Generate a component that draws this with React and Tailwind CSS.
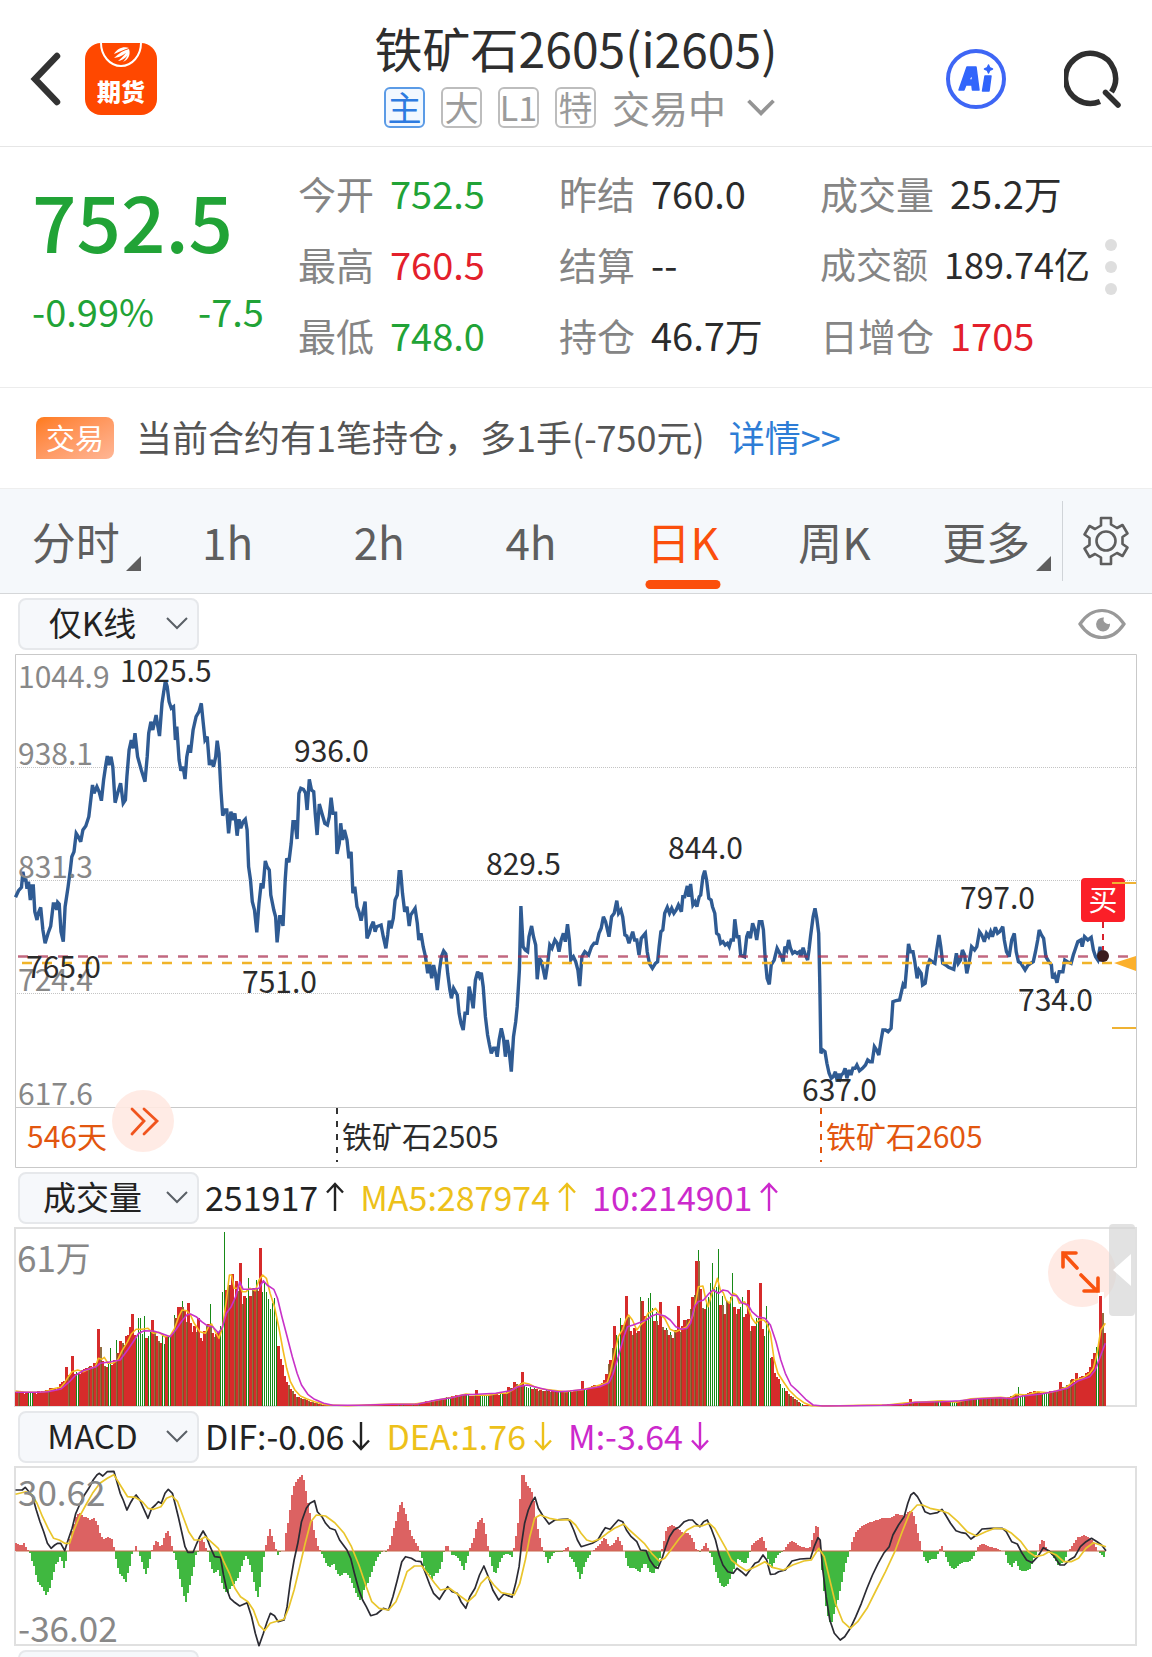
import React from "react";

/* ---------- chart data ---------- */

const parse = (text, originX, scaleX, originY) =>
  text
    .trim()
    .split(/\s+/)
    .map((pair) => {
      const [x, y] = pair.split(",").map(Number);
      return [originX + x / scaleX, originY + y / 3];
    });

const series = (early, late, originY) => {
  const b = parse(late, 570, 2.694, originY);
  const a = parse(early, 0, 2.703, originY).filter((p) => p[0] < b[0][0]);
  return [...a, ...b];
};

const toPath = (points) =>
  points.map(([x, y], i) => `${i ? "L" : "M"}${x.toFixed(1)} ${y.toFixed(1)}`).join("");

const valueAt = (points, x) => {
  for (let i = 1; i < points.length; i++) {
    if (points[i][0] >= x) {
      const [x0, y0] = points[i - 1];
      const [x1, y1] = points[i];
      return y0 + ((y1 - y0) * (x - x0)) / (x1 - x0 || 1);
    }
  }
  return points[points.length - 1][1];
};

const PRICE = series(
  `42,742 50,722 58,712 62,665 66,690 70,690 73,716 77,695 82,750 86,708 90,708 94,785 100,810 104,788 110,772 116,840 122,880 130,850 137,828 144,762 150,762 153,780 156,757 160,762 165,845 171,875 176,770 184,710 190,660 194,620 200,605 206,550 212,560 218,575 224,540 232,528 240,500 250,405 254,430 262,410 268,425 274,452 280,390 286,345 290,318 294,345 300,320 305,350 311,458 318,430 326,400 333,460 339,450 343,380 349,300 355,270 360,295 365,250 372,320 382,360 392,395 398,320 402,250 408,215 413,240 422,195 426,225 431,258 438,160 447,92 452,110 457,155 463,175 469,170 474,270 478,230 484,330 489,362 495,350 500,387 505,320 511,285 515,308 522,240 530,200 538,185 544,160 549,215 554,270 560,260 566,345 571,330 577,350 583,320 587,272 592,310 597,420 602,497 608,480 613,480 618,550 624,485 630,510 635,490 641,557 646,508 651,535 657,515 663,508 668,540 672,650 677,690 682,755 688,780 694,847 700,760 706,700 711,715 717,633 722,650 728,660 732,735 740,780 745,800 749,877 756,800 760,800 765,828 771,690 775,625 781,637 787,580 792,515 797,515 803,567 808,430 813,415 820,418 826,430 830,480 836,388 842,420 848,425 852,490 857,555 863,462 870,490 878,520 885,525 890,500 895,443 900,490 907,490 911,612 917,580 921,520 926,570 931,540 938,570 943,625 949,605 954,730 959,710 965,770 970,785 976,812 982,780 987,755 992,865 998,850 1003,830 1009,815 1014,845 1018,830 1030,825 1036,860 1043,895 1048,855 1052,812 1057,835 1063,805 1068,750 1074,735 1079,665 1083,665 1088,730 1094,785 1100,770 1106,828 1110,795 1122,775 1128,820 1132,870 1138,850 1144,890 1150,920 1156,970 1161,940 1167,985 1172,945 1177,970 1182,1020 1188,960 1193,920 1199,903 1205,912 1210,970 1216,1020 1220,1045 1226,1015 1236,1035 1241,1090 1246,1120 1252,1140 1257,1090 1263,1090 1268,1010 1274,1040 1279,1075 1285,990 1291,965 1296,980 1301,968 1306,1010 1312,1100 1318,1155 1323,1185 1328,1210 1334,1195 1340,1195 1344,1220 1349,1170 1355,1135 1361,1165 1366,1220 1371,1170 1377,1210 1382,1265 1388,1160 1394,1115 1398,1070 1404,960 1408,768 1414,890 1420,900 1426,905 1430,860 1437,828 1442,860 1448,885 1452,988 1458,925 1464,935 1474,988 1480,945 1486,885 1492,895 1500,870 1506,880 1511,905 1517,870 1523,850 1528,875 1534,823 1539,870 1543,930 1550,920 1556,935 1562,960`,
  `26,1008 32,920 40,905 50,915 58,890 65,880 72,880 78,850 84,835 90,800 96,815 105,860 112,800 119,790 126,752 131,790 137,780 142,800 148,855 153,858 159,880 164,862 169,845 174,870 180,870 186,915 192,865 203,850 208,905 214,940 222,955 230,940 236,935 240,890 245,845 250,840 255,790 262,772 268,790 274,775 280,790 286,780 292,765 300,785 304,740 309,740 316,708 320,740 325,702 331,765 337,755 342,770 348,740 352,735 358,680 363,662 368,690 374,745 380,750 384,770 390,790 395,850 401,855 406,880 412,875 418,885 424,880 429,890 434,870 440,870 444,808 450,860 455,860 460,915 470,920 476,860 481,845 486,865 492,820 498,840 503,870 510,815 517,815 521,840 526,925 531,985 537,1003 542,945 550,930 558,895 565,910 570,920 574,935 579,890 584,900 589,870 594,895 600,910 606,905 612,910 618,905 622,918 628,893 634,915 640,930 644,900 648,860 655,800 660,775 665,805 670,850 673,1000 676,1210 681,1200 687,1205 692,1240 698,1270 704,1285 709,1280 715,1265 720,1295 724,1270 725,1295 731,1275 736,1270 741,1255 746,1285 752,1260 757,1275 762,1255 768,1255 773,1245 780,1262 788,1255 796,1245 802,1230 808,1235 814,1235 820,1190 826,1200 832,1215 838,1170 843,1140 850,1140 857,1145 865,1135 870,1055 878,1052 888,1050 893,1025 897,1005 902,1015 907,950 912,882 917,905 924,905 929,935 935,985 940,960 946,970 950,1005 957,1000 963,950 969,930 976,935 983,940 988,900 994,855 999,890 1004,940 1012,945 1020,952 1034,958 1041,910 1046,940 1052,930 1057,900 1063,915 1069,970 1075,940 1082,890 1090,900 1096,890 1103,845 1109,855 1116,875 1122,850 1128,860 1133,845 1138,860 1146,832 1152,850 1158,845 1166,830 1170,870 1176,905 1183,920 1190,870 1197,850 1202,905 1208,935 1215,940 1226,960 1234,945 1248,935 1254,905 1260,870 1264,840 1270,855 1276,865 1282,920 1290,935 1297,945 1300,985 1306,975 1312,998 1318,965 1328,965 1333,930 1340,935 1350,940 1356,915 1362,895 1368,875 1376,870 1380,890 1386,860 1395,870 1404,862 1410,900 1416,920 1422,930 1428,890 1430,935`,
  650
);

const MA5 = series(
  `42,693 70,697 95,697 115,696 130,692 150,685 165,682 175,668 185,650 195,635 210,630 225,635 245,625 258,620 266,595 275,598 282,592 292,610 305,610 318,600 330,572 345,545 355,522 368,508 385,508 400,505 415,520 430,517 445,530 460,528 472,505 483,470 492,450 505,452 515,465 525,490 540,515 555,520 565,498 572,492 582,515 592,535 602,500 612,420 620,345 626,345 633,385 642,385 648,375 655,395 665,395 675,385 690,392 700,360 710,345 720,355 730,400 742,440 755,510 765,570 775,625 785,665 797,690 812,708 830,717 850,725 880,734 940,737 1000,734 1060,732 1120,732 1160,725 1200,716 1230,710 1260,702 1290,706 1320,706 1350,700 1370,700 1385,690 1400,678 1415,668 1430,672 1445,680 1460,686 1490,690 1530,695`,
  `0,693 30,690 60,682 80,675 100,668 108,640 118,590 130,530 142,508 150,480 158,465 168,480 180,510 190,495 200,485 210,460 220,455 230,445 240,460 255,475 270,508 285,515 300,508 315,500 330,470 338,430 346,380 358,378 366,420 372,440 382,400 390,380 397,355 405,390 413,398 420,420 430,430 440,400 448,405 456,430 470,425 480,445 490,475 500,490 510,480 522,480 530,490 540,520 550,600 560,640 575,665 590,690 610,712 630,728 650,737 700,738 780,736 860,734 900,729 930,727 960,725 1000,722 1040,727 1080,716 1120,714 1160,712 1185,715 1200,703 1230,705 1260,695 1290,698 1320,690 1340,680 1360,660 1380,655 1400,640 1410,625 1420,580 1430,510 1442,490`,
  1160
);

const MA10 = series(
  `42,697 100,697 130,695 165,687 185,668 205,645 225,632 260,620 270,610 300,605 325,600 345,570 360,545 375,520 390,512 415,513 435,520 460,530 475,510 490,485 505,465 515,462 530,470 545,485 560,497 575,500 590,518 600,505 612,460 625,440 637,410 648,365 657,388 680,388 700,385 712,362 722,375 740,388 750,415 762,470 775,525 790,590 803,640 815,675 832,703 850,718 875,730 900,736 970,736 1060,733 1130,732 1180,720 1220,713 1250,705 1290,703 1340,700 1380,692 1400,680 1425,675 1450,682 1480,690 1510,695`,
  `0,693 40,688 80,680 105,668 115,645 130,590 145,530 155,500 170,495 190,487 205,480 220,468 235,462 255,468 270,480 285,500 300,508 315,505 325,490 335,440 345,425 360,420 375,400 385,390 400,400 412,390 425,393 435,405 450,408 462,428 480,435 490,455 505,470 525,475 540,495 555,545 568,600 580,640 595,675 615,695 635,718 655,735 680,738 760,737 840,736 900,733 930,727 1000,725 1050,722 1100,716 1160,713 1190,716 1220,708 1270,702 1310,693 1340,685 1370,662 1400,650 1415,630 1425,600 1442,550`,
  1160
);

const HIST = series(
  `42,1150 50,1152 58,1158 66,1148 74,1170 80,1173 86,1200 94,1225 100,1262 108,1275 116,1285 125,1305 134,1290 142,1255 150,1215 156,1208 160,1190 166,1195 172,1228 178,1205 184,1173 190,1130 198,1100 206,1070 214,1058 225,1070 235,1072 245,1080 254,1073 264,1090 272,1125 280,1137 292,1130 305,1140 310,1172 314,1200 322,1240 332,1250 340,1270 346,1240 352,1215 358,1175 363,1172 367,1155 372,1172 378,1185 386,1215 394,1245 400,1225 406,1195 410,1173 416,1155 424,1140 432,1158 438,1155 446,1125 453,1110 460,1130 466,1165 472,1185 480,1220 488,1265 496,1300 502,1330 508,1300 516,1262 524,1225 530,1185 536,1173 540,1145 548,1130 555,1160 562,1175 570,1220 578,1240 590,1230 598,1262 606,1290 615,1300 625,1282 635,1270 645,1250 655,1215 664,1188 672,1200 680,1230 690,1285 697,1312 704,1275 710,1220 716,1173 720,1150 729,1105 738,1140 745,1160 750,1187 758,1175 768,1172 774,1110 782,1070 788,1010 796,970 804,960 816,945 822,960 828,1000 836,1050 844,1085 852,1125 860,1160 866,1173 876,1195 884,1215 892,1222 902,1210 912,1240 920,1250 932,1235 942,1245 952,1270 962,1300 976,1325 984,1290 994,1270 1004,1240 1014,1210 1024,1185 1034,1173 1046,1175 1054,1155 1062,1115 1070,1085 1078,1045 1086,1023 1094,1050 1102,1080 1110,1120 1120,1140 1130,1158 1140,1190 1150,1235 1160,1240 1168,1258 1176,1240 1186,1240 1194,1210 1200,1175 1206,1155 1212,1158 1220,1185 1230,1185 1240,1195 1254,1230 1262,1200 1270,1165 1280,1140 1290,1090 1300,1075 1306,1075 1312,1110 1320,1165 1326,1200 1334,1235 1342,1240 1350,1210 1360,1185 1370,1180 1384,1190 1392,1150 1400,1090 1406,1010 1411,945 1416,945 1424,975 1434,985 1442,1010 1450,1085 1458,1125 1466,1165 1472,1180 1482,1210 1490,1190 1500,1175 1520,1175 1535,1160`,
  `0,1190 8,1200 18,1225 28,1260 38,1220 48,1195 60,1173 75,1160 85,1145 95,1130 105,1160 118,1150 130,1130 140,1155 148,1180 158,1225 175,1225 188,1238 202,1205 214,1235 225,1240 238,1215 246,1175 252,1150 260,1105 274,1095 290,1105 305,1120 320,1120 332,1140 340,1168 350,1175 358,1165 366,1148 374,1170 382,1190 392,1230 402,1265 412,1283 425,1275 435,1245 445,1220 452,1195 462,1205 475,1210 484,1180 490,1155 500,1145 510,1135 520,1130 528,1165 534,1200 544,1225 554,1195 562,1182 575,1173 585,1155 596,1142 608,1150 625,1160 645,1165 655,1130 662,1098 668,1100 674,1145 680,1250 688,1330 698,1385 706,1385 714,1350 722,1320 732,1270 742,1215 752,1180 760,1145 770,1115 785,1100 800,1090 820,1083 840,1075 860,1075 880,1062 900,1068 918,1050 928,1070 936,1110 944,1150 952,1185 962,1212 972,1195 985,1200 995,1170 1002,1158 1010,1185 1022,1215 1036,1230 1048,1215 1060,1205 1075,1208 1090,1185 1102,1155 1115,1152 1130,1160 1150,1165 1160,1172 1172,1173 1180,1210 1190,1222 1200,1200 1212,1230 1225,1235 1240,1225 1250,1195 1260,1175 1268,1145 1274,1135 1282,1160 1292,1175 1302,1190 1315,1215 1330,1208 1342,1173 1355,1155 1368,1132 1385,1125 1400,1132 1412,1150 1422,1173 1432,1185 1444,1198`,
  1160
);

const DIF = series(
  `42,990 60,990 68,982 76,992 88,1010 98,1050 108,1085 118,1115 128,1150 138,1165 148,1155 156,1150 164,1150 175,1172 184,1140 195,1105 205,1060 215,1035 228,1005 240,985 252,960 262,945 268,940 278,948 290,935 308,934 316,965 325,1000 333,1020 343,1050 352,1030 360,1015 368,1005 378,1020 388,1045 400,1075 410,1045 420,1035 428,1025 436,1030 446,1000 455,988 466,1000 474,1035 482,1070 492,1120 500,1160 508,1177 522,1177 532,1150 540,1130 549,1113 558,1130 568,1160 580,1190 596,1192 604,1245 612,1285 622,1315 632,1325 648,1338 668,1328 680,1370 690,1420 700,1457 712,1420 722,1385 731,1360 742,1367 752,1385 768,1380 776,1340 785,1265 795,1200 805,1150 815,1085 828,1045 838,1030 850,1022 858,1055 870,1070 880,1090 892,1105 906,1110 918,1140 938,1170 948,1195 958,1240 970,1290 980,1320 990,1340 1002,1367 1018,1362 1036,1345 1050,1350 1062,1310 1074,1260 1086,1205 1096,1190 1112,1195 1124,1203 1138,1205 1150,1240 1162,1275 1172,1300 1188,1318 1198,1300 1210,1280 1222,1295 1236,1300 1246,1325 1259,1345 1270,1310 1284,1285 1296,1245 1308,1218 1320,1250 1332,1290 1348,1320 1362,1302 1384,1312 1394,1270 1403,1220 1410,1150 1418,1090 1428,1050 1438,1025 1446,1012 1455,1045 1466,1065 1484,1092 1500,1080 1520,1078 1535,1077`,
  `0,1085 10,1110 20,1140 30,1160 45,1155 60,1150 75,1140 85,1120 95,1103 108,1108 118,1095 130,1080 142,1085 152,1110 165,1130 180,1145 190,1170 205,1172 215,1200 228,1220 237,1225 248,1195 258,1160 268,1130 280,1110 295,1100 308,1085 320,1080 330,1080 340,1092 350,1100 360,1085 370,1080 380,1105 392,1140 402,1185 412,1215 425,1235 440,1240 450,1225 462,1235 474,1247 485,1230 498,1210 508,1205 520,1185 530,1200 540,1243 552,1242 562,1235 580,1230 598,1203 620,1197 648,1195 658,1160 668,1133 674,1140 680,1220 690,1310 700,1380 712,1420 728,1440 740,1430 755,1405 770,1370 785,1330 800,1285 815,1245 830,1210 845,1180 860,1160 870,1125 885,1095 900,1070 910,1030 918,1005 926,998 936,1010 946,1030 956,1055 970,1062 990,1058 1002,1048 1012,1065 1025,1090 1040,1112 1055,1118 1066,1120 1080,1137 1095,1125 1110,1107 1135,1105 1165,1105 1175,1115 1190,1145 1205,1152 1218,1180 1230,1200 1245,1208 1260,1190 1275,1163 1290,1172 1305,1190 1320,1215 1332,1215 1345,1200 1360,1190 1375,1160 1390,1145 1405,1135 1420,1145 1432,1155 1444,1172`,
  1160
);

const DEA = series(
  `42,1003 70,995 85,1003 100,1030 115,1070 130,1105 145,1135 160,1140 175,1150 188,1150 200,1110 215,1070 232,1035 250,1000 270,970 290,955 308,944 325,975 345,1010 365,1012 385,1025 400,1045 415,1048 435,1040 450,1015 465,1008 480,1025 495,1070 510,1115 525,1140 540,1140 555,1130 570,1145 590,1165 605,1205 620,1240 635,1285 650,1310 670,1325 685,1350 700,1395 715,1412 730,1390 750,1383 768,1378 780,1345 795,1290 810,1220 825,1150 840,1085 855,1065 880,1068 905,1088 930,1120 950,1160 970,1215 990,1280 1005,1325 1025,1345 1050,1350 1070,1325 1085,1285 1100,1235 1120,1218 1140,1218 1155,1240 1175,1270 1190,1290 1215,1285 1240,1305 1265,1325 1285,1305 1300,1270 1318,1250 1335,1275 1355,1298 1390,1305 1405,1270 1420,1200 1432,1130 1445,1075 1460,1065 1485,1075 1510,1080 1535,1079`,
  `0,1080 15,1095 30,1120 45,1140 60,1145 80,1137 100,1120 120,1105 145,1092 160,1110 180,1130 200,1150 220,1180 240,1203 255,1195 275,1165 295,1135 315,1110 335,1098 355,1098 375,1090 390,1105 405,1135 420,1165 435,1200 455,1218 475,1232 500,1220 525,1205 545,1222 575,1230 600,1215 630,1203 650,1200 670,1165 685,1190 700,1260 715,1330 735,1385 755,1405 775,1385 800,1345 825,1290 850,1235 875,1175 895,1115 915,1060 935,1035 950,1035 970,1045 1000,1052 1020,1060 1045,1085 1070,1115 1095,1128 1120,1115 1145,1105 1170,1107 1190,1120 1215,1145 1235,1175 1255,1190 1275,1185 1290,1175 1310,1185 1330,1205 1350,1205 1370,1195 1390,1165 1410,1148 1444,1160`,
  1160
);

/* Volume outliers: [x, top, colour] */
const SPIKES = [
  ...parse("193,588 181,620 263,507 323,544 355,462 349,500 409,480 480,440 485,440 507,428 534,475 647,308 626,342 609,390 701,264 1285,690 1410,635 1372,680 1388,665", 0, 2.703, 1160).map((p) => [...p, "r"]),
  ...parse("268,560 296,565 312,540 371,474 380,475 388,467 490,423 566,432 599,397 604,215 673,355 690,360 735,430 740,415 745,475", 0, 2.703, 1160).map((p) => [...p, "g"]),
  ...parse("30,662 116,498 153,407 192,422 241,427 290,438 307,480 337,302 478,390 511,368 544,590 915,717 1318,665 1361,640 1390,640", 570, 2.694, 1160).map((p) => [...p, "r"]),
  ...parse("133,473 187,411 208,415 213,400 343,270 375,370 380,310 397,268 435,340 462,410 526,437 531,490 1205,682 1415,560", 570, 2.694, 1160).map((p) => [...p, "g"]),
];

/* The latest four sessions */
const LATEST = {
  1098: [60, "g"],
  1100: [110, "r"],
  1102: [93, "g"],
  1104: [73, "r"],
};

/* Stretches of consecutive falling days */
const GREEN_RUNS = [
  [137, 144], [268, 276], [447, 451], [484, 488], [526, 530], [646, 652], [708, 716], [763, 769], [781, 785], [1017, 1024], [1042, 1048],
];

/* Stretches where rising and falling days alternate */
const MIXED_RUNS = [
  [96, 112], [148, 158], [172, 186], [206, 214], [224, 262], [290, 330], [430, 470], [500, 570], [608, 636], [650, 706], [718, 740], [780, 800], [960, 1016], [1050, 1076],
];

const within = (runs, x) => runs.some(([a, b]) => x >= a && x <= b);

const VOLUME_BARS = (() => {
  let seed = 17;
  const random = () => {
    seed = (seed * 1103515245 + 12345) % 2147483648;
    return seed / 2147483648;
  };
  const bars = [];
  let previous = "r";
  for (let x = 16; x < 1106; x += 2) {
    const base = 1406 - valueAt(MA5, Math.min(x + 4, 1104));
    let height = base * (0.88 + random() * 0.16);
    const roll = random();
    let tone = "r";
    if (within(GREEN_RUNS, x)) tone = "g";
    else if (within(MIXED_RUNS, x)) tone = previous === "g" ? (roll < 0.06 ? "g" : "r") : "g";
    else if (roll < (previous === "g" ? 0.25 : 0.22)) tone = "g";
    const spike = SPIKES.find((s) => Math.abs(s[0] - x) <= 1);
    if (spike) {
      height = 1406 - spike[1];
      tone = spike[2];
    }
    if (LATEST[x]) [height, tone] = LATEST[x];
    bars.push({ x, height: Math.max(1, Math.round(height)), tone });
    previous = tone;
  }
  return bars;
})();

const MACD_BARS = (() => {
  const bars = [];
  for (let x = 16; x < 1106; x += 2) bars.push({ x, y: Math.round(valueAt(HIST, x)) });
  return bars;
})();

const heightOf = (i) => (VOLUME_BARS[i] ? VOLUME_BARS[i].height : 0);
const isRed = (i) => !VOLUME_BARS[i] || VOLUME_BARS[i].tone === "r";

const redVolume = VOLUME_BARS.filter((b) => b.tone === "r")
  .map((b) => `M${b.x - 1} 1406v${-b.height}h3v${b.height}z`)
  .join("");

const mixedVolume = VOLUME_BARS.map((b, i) => {
  if (b.tone === "r" || !isRed(i - 1) || !isRed(i + 1)) return "";
  const h = Math.min(b.height, Math.max(heightOf(i - 1), heightOf(i + 1)));
  return `M${b.x} 1406v${-h}h2v${h}z`;
}).join("");

const greenVolume = VOLUME_BARS.map((b, i) => {
  if (b.tone === "r") return "";
  const alone = isRed(i - 1) && isRed(i + 1);
  const floor = alone ? Math.max(heightOf(i - 1), heightOf(i + 1)) : 0;
  return b.height > floor ? `M${b.x} ${1406 - floor}V${1406 - b.height}h1V${1406 - floor}z` : "";
}).join("");

const macdPath = (test) =>
  MACD_BARS.filter((b) => test(b.y))
    .map((b) => `M${b.x - 1} 1551V${b.y}h2V1551z`)
    .join("");

/* ---------- small pieces ---------- */

const Chevron = ({ className }) => (
  <svg viewBox="0 0 24 14" className={className} fill="none" stroke="currentColor" aria-hidden="true">
    <path d="M2 2l10 10L22 2" />
  </svg>
);

const Arrow = ({ down }) => (
  <svg viewBox="0 0 18 30" className="ml-2 h-[30px] w-[18px]" fill="none" stroke="currentColor" strokeWidth="2.4" aria-hidden="true">
    {down ? <path d="M9 1v27M1 19.500l8 8.500l8-8.500" /> : <path d="M9 29V2M1 10.500L9 2l8 8.500" />}
  </svg>
);

const Picker = ({ label, value }) => (
  <div className="relative">
    <select
      aria-label={label}
      defaultValue={value}
      className="h-[52px] w-[181px] appearance-none rounded-lg border-2 border-[#e6e8eb] bg-[#f6f8fb] pr-8 pb-1 text-center text-[33px] leading-[44px] text-[#222]"
      style={{ textAlignLast: "center" }}
    >
      <option>{value}</option>
    </select>
    <Chevron className="pointer-events-none absolute top-[18px] right-[10px] h-[14px] w-6 stroke-2 text-[#5a6066]" />
  </div>
);

const Reading = ({ text, down, className }) => (
  <span className={`flex items-center whitespace-nowrap pb-[2px] text-[34px] leading-[48px] ${className}`}>
    {text}
    <Arrow down={down} />
  </span>
);

const Tag = ({ children, active }) => (
  <span
    className={`flex size-[41px] items-center justify-center rounded-md border-2 text-[34px] leading-none ${
      active ? "border-[#5b9be6] bg-[#f2f8ff] text-[#2e7be0]" : "border-[#bdbdbd] text-[#9b9b9b]"
    }`}
  >
    {children}
  </span>
);

const GREEN = "text-[#21a336]";
const RED = "text-[#e3202b]";
const INK = "text-[#2b2b2b]";

const QUOTES = [
  ["今开", "752.5", GREEN],
  ["昨结", "760.0", INK],
  ["成交量", "25.2万", INK],
  ["最高", "760.5", RED],
  ["结算", "--", INK],
  ["成交额", "189.74亿", INK, true],
  ["最低", "748.0", GREEN],
  ["持仓", "46.7万", INK],
  ["日增仓", "1705", RED],
];

const PERIODS = ["分时", "1h", "2h", "4h", "日K", "周K", "更多"];

const PRICE_LABELS = [
  [120, 682, "1025.5"],
  [294, 762, "936.0"],
  [486, 875, "829.5"],
  [668, 859, "844.0"],
  [960, 909, "797.0"],
  [1018, 1011, "734.0"],
  [242, 993, "751.0"],
  [802, 1101, "637.0"],
  [26, 978, "765.0"],
];

const SCALE_LABELS = [
  [18, 688, "1044.9"],
  [18, 765, "938.1"],
  [18, 878, "831.3"],
  [18, 991, "724.4"],
  [18, 1105, "617.6"],
];

/* ---------- sections ---------- */

function Header() {
  return (
    <header className="grid h-[147px] grid-cols-[1fr_auto_1fr] items-center border-b border-[#e6e6e6] px-7">
      <div className="flex items-center gap-[21px] pt-3">
        <button aria-label="返回" className="h-14 w-9">
          <svg viewBox="0 0 36 56" fill="none" stroke="#333" strokeWidth="6.500" strokeLinecap="round" strokeLinejoin="miter">
            <path d="M29 5L7 28L29 51" />
          </svg>
        </button>
        <button aria-label="期货" className="relative flex size-[72px] items-end justify-center overflow-hidden rounded-2xl bg-[#ff4800] pb-3">
          <svg viewBox="0 0 72 72" className="absolute inset-0" fill="none" aria-hidden="true">
            <path d="M16 0a20 23 0 0 0 40 0" stroke="#fff" strokeWidth="2" />
            <path d="M29 11C32 6 38 3 44 5C38 7 34 9 29 11zM29 15C34 10 39 7 44 6C41 11 36 14 29 15zM33 18C38 14 41 10 44 6C44 12 40 17 33 18zM38 19C42 15 43 11 44 6C46 12 43 17 38 19z" fill="#fff" />
          </svg>
          <span className="text-2xl leading-none font-black text-white">期货</span>
        </button>
      </div>
      <div className="flex flex-col items-center">
        <h1 className="pb-1 text-5xl leading-[60px] text-[#2e2e2e]">铁矿石2605(i2605)</h1>
        <div className="mt-1 flex items-center gap-4 pl-2">
          <Tag active>主</Tag>
          <Tag>大</Tag>
          <Tag>L1</Tag>
          <Tag>特</Tag>
          <button className="flex items-center gap-5 text-[38px] leading-[44px] text-[#949494]">
            交易中
            <Chevron className="h-[18px] w-[30px] stroke-3" />
          </button>
        </div>
      </div>
      <div className="flex items-center justify-end gap-[58px] pt-3">
        <button aria-label="Ai" className="relative flex size-[60px] items-center justify-center rounded-full border-4 border-[#3e66f5]">
          <svg viewBox="0 0 60 60" className="size-[60px] shrink-0" aria-hidden="true">
            <g fill="#3165fb" stroke="#3165fb" strokeWidth="1.500" strokeLinejoin="round">
              <path fillRule="evenodd" d="M13 41L21 18h9l3 23h-6.500l-.6-5h-6l-2 5zM23 31h3.500l-.5-6.500z" />
              <path d="M39 27h6l-2 15h-6.500z" />
              <path d="M42.500 16l1.200 2.800l2.800 1.200l-2.800 1.200l-1.200 2.800l-1.200-2.800l-2.800-1.200l2.800-1.200z" />
            </g>
          </svg>
        </button>
        <button aria-label="搜索" className="size-[60px]">
          <svg viewBox="0 0 60 60" fill="none" stroke="#2f2f2f" strokeWidth="5.500">
            <path d="M36 52.500A25 25 0 1 1 47.500 43" />
            <path d="M41.500 43.500L54 56" strokeLinecap="round" />
          </svg>
        </button>
      </div>
    </header>
  );
}

function QuotePanel() {
  return (
    <section className="flex h-[241px] items-center border-b border-[#ececec] pb-2">
      <div className="w-[298px] shrink-0 pb-4 pl-8">
        <p className="text-[78px] leading-[92px] font-medium text-[#21a336]">752.5</p>
        <p className="mt-5 flex gap-11 text-[38px] leading-[52px] whitespace-nowrap text-[#21a336]">
          <span>-0.99%</span>
          <span>-7.5</span>
        </p>
      </div>
      <dl className="grid min-w-0 flex-1 grid-cols-3">
        {QUOTES.map(([label, value, tone, compact]) => (
          <div key={label} className={`flex h-[71px] items-center gap-4 whitespace-nowrap ${compact ? "text-[36px]" : "text-[38px]"}`}>
            <dt className="text-[#858585]">{label}</dt>
            <dd className={tone}>{value}</dd>
          </div>
        ))}
      </dl>
      <button aria-label="更多行情" className="flex w-[71px] shrink-0 flex-col items-center gap-[10px] pt-2 pr-3">
        <i className="size-3 rounded-full bg-[#dedede]" />
        <i className="size-3 rounded-full bg-[#dedede]" />
        <i className="size-3 rounded-full bg-[#dedede]" />
      </button>
    </section>
  );
}

function PositionNotice() {
  return (
    <section className="flex h-[100px] items-center pl-9 text-[36px] whitespace-nowrap text-[#555]">
      <span className="mr-[22px] flex h-[42px] w-[78px] items-center justify-center rounded-tl-lg rounded-r-lg bg-linear-to-br from-[#ff7a12] to-[#ffb695] text-[29px] text-white">
        交易
      </span>
      <span className="pb-1">当前合约有1笔持仓，多1手(-750元)</span>
      <a href="#detail" className="ml-6 pb-1 text-[#2e7dd6]">
        详情&gt;&gt;
      </a>
    </section>
  );
}

function PeriodTabs() {
  return (
    <nav className="flex h-[106px] items-stretch border-t border-b border-t-[#eee] border-b-[#d5d7d9] bg-[#f5f8fb]">
      <div className="grid flex-1 grid-cols-7">
        {PERIODS.map((name) => {
          const active = name === "日K";
          const menu = name === "分时" || name === "更多";
          return (
            <button key={name} className={`relative text-[44px] ${active ? "text-[#fb4f0c]" : "text-[#5e5e5e]"}`}>
              {name}
              {active && <span className="absolute bottom-1 left-1/2 h-[9px] w-[75px] -translate-x-1/2 rounded-full bg-[#fb4f0c]" />}
              {menu && (
                <svg viewBox="0 0 15 15" className="absolute right-[11px] bottom-[22px] size-[15px]" aria-hidden="true">
                  <path d="M15 0v15H0z" fill="#5e5e5e" />
                </svg>
              )}
            </button>
          );
        })}
      </div>
      <button aria-label="设置" className="my-3 flex w-[90px] items-center justify-center border-l border-[#d0d4d8] pr-1">
        <svg viewBox="0 0 48 50" className="h-[50px] w-12" fill="none" stroke="#5e5e5e" strokeWidth="2.600" strokeLinejoin="round" aria-hidden="true">
          <path d="M19 2h10v6.500l6 3.500l5.500-3l5 8.500l-5 3.500v7l5 3.500l-5 8.500l-5.500-3l-6 3.500V48H19v-6.500l-6-3.500l-5.500 3l-5-8.500l5-3.500v-7l-5-3.500l5-8.500l5.500 3l6-3.500z" />
          <circle cx="24" cy="25" r="9.500" />
        </svg>
      </button>
    </nav>
  );
}

function PriceChart() {
  return (
    <div className="relative">
      <svg viewBox="0 654 1152 514" className="block w-full overflow-visible" aria-label="日K走势">
        <g fill="none" stroke="#c9c9c9">
          <path d="M15.500 654.500H1136.500V1167.500H15.500zM15.500 1107.500H1136.500" />
          <path d="M15 767.500H1136M15 880.500H1136M15 993.500H1136" strokeDasharray="1 1" stroke="#c4c4c4" />
        </g>
        <path d={toPath(PRICE)} fill="none" stroke="#2f5b93" strokeWidth="3.400" strokeLinejoin="miter" strokeMiterlimit="3" />
        <path d="M18 956.500H1130" fill="none" stroke="#a8284a" strokeOpacity="0.7" strokeWidth="2.500" strokeDasharray="10 10" />
        <path d="M22 963H1112" fill="none" stroke="#f0b429" strokeWidth="2.500" strokeDasharray="10 10" />
        <g fontSize="30" fill="#888">
          {SCALE_LABELS.map(([x, y, t]) => (
            <text key={t} x={x} y={y}>{t}</text>
          ))}
        </g>
        <g fontSize="30" fill="#2b2b2b">
          {PRICE_LABELS.map(([x, y, t]) => (
            <text key={t} x={x} y={y}>{t}</text>
          ))}
          <text x="342" y="1148">铁矿石2505</text>
        </g>
        <g fontSize="30" fill="#e2560f">
          <text x="27" y="1148">546天</text>
          <text x="826" y="1148">铁矿石2605</text>
        </g>
        <path d="M337 1108V1162" stroke="#333" strokeWidth="2" strokeDasharray="6 7" />
        <path d="M821 1108V1162" stroke="#e2560f" strokeWidth="2" strokeDasharray="6 7" />
        <rect x="1081" y="878" width="44" height="44" rx="4" fill="#fb1f28" />
        <text x="1103" y="911" fontSize="29" fill="#fff" textAnchor="middle">买</text>
        <path d="M1103 922V950" stroke="#d8202c" strokeWidth="2" strokeDasharray="6 6" />
        <circle cx="1103" cy="956" r="6" fill="#3b1d1f" />
        <path d="M1112 883H1136M1112 1028H1136" stroke="#efb233" strokeWidth="2" />
        <path d="M1114 963L1136 956V971z" fill="#fbb02d" />
      </svg>
      <button aria-label="快进" className="absolute bottom-4 left-28 size-[62px] rounded-full bg-[#ffe9e2]/90">
        <svg viewBox="0 0 62 62" fill="none" stroke="#f0541e" strokeWidth="2.800" strokeLinecap="round">
          <path d="M20 19L32 31L20 44M32 19L45 31L32 44" />
        </svg>
      </button>
    </div>
  );
}

function VolumeChart() {
  return (
    <div className="relative">
      <svg viewBox="0 1227 1152 180" className="block w-full overflow-visible" aria-label="成交量">
        <path d="M15 1228H1136V1406H15z" fill="none" stroke="#e0e0e0" strokeWidth="2" />
        <g shapeRendering="crispEdges">
          <path d={redVolume} fill="#d62b2b" />
          <path d={mixedVolume} fill="#7d5320" fillOpacity="0.85" />
          <path d={greenVolume} fill="#178a17" />
        </g>
        <path d={toPath(MA5)} fill="none" stroke="#f5bd1f" strokeWidth="1.600" strokeLinejoin="round" />
        <path d={toPath(MA10)} fill="none" stroke="#c832c8" strokeWidth="1.600" strokeLinejoin="round" />
        <text x="17" y="1272" fontSize="35" fill="#888">61万</text>
      </svg>
      <button aria-label="全屏" className="absolute top-3 right-9 size-[68px] rounded-full">
        <svg viewBox="0 0 68 68" fill="none" stroke="#f9530f" strokeWidth="3.600" strokeLinecap="round">
          <path d="M34 0A34 34 0 0 0 34 68A34 34 0 0 0 50 64V53H56V60A34 34 0 0 0 34 0z" fill="#ffe6df" fillOpacity="0.85" stroke="none" />
          <path d="M29 29L15 14M15 28V14H28M33 36L49 52M50 39V52H36" />
        </svg>
      </button>
      <button aria-label="展开侧栏" className="absolute -top-[3px] right-[17px] flex h-[92px] w-[26px] items-center justify-center rounded bg-[#d6d6d6]/70">
        <svg viewBox="0 0 18 32" className="h-8 w-[18px]">
          <path d="M0 16L18 0V32z" fill="#fff" />
        </svg>
      </button>
    </div>
  );
}

function MacdChart() {
  return (
    <svg viewBox="0 1466 1152 180" className="block w-full overflow-visible" aria-label="MACD">
      <path d="M15 1467H1136V1645H15z" fill="none" stroke="#e0e0e0" strokeWidth="2" />
      <g shapeRendering="crispEdges">
        <path d={macdPath((y) => y < 1551)} fill="#dc6262" />
        <path d={macdPath((y) => y > 1551)} fill="#40b840" />
      </g>
      <path d="M16 1551H1106" stroke="#c9694d" strokeWidth="1" />
      <path d={toPath(DIF)} fill="none" stroke="#2b2b33" strokeWidth="1.700" strokeLinejoin="round" />
      <path d={toPath(DEA)} fill="none" stroke="#e9c52c" strokeWidth="1.700" strokeLinejoin="round" />
      <g fontSize="35" fill="#888">
        <text x="18" y="1506">30.62</text>
        <text x="18" y="1642">-36.02</text>
      </g>
    </svg>
  );
}

export default function App() {
  return (
    <main className="h-screen overflow-hidden bg-white font-['Noto_Sans_CJK_SC',sans-serif] text-[#2b2b2b]">
      <Header />
      <QuotePanel />
      <PositionNotice />
      <PeriodTabs />
      <div className="flex h-[60px] items-center justify-between pr-[26px] pl-[18px]">
        <Picker label="主图指标" value="仅K线" />
        <button aria-label="显示设置" className="h-8 w-12">
          <svg viewBox="0 0 48 32" fill="none" aria-hidden="true">
            <path d="M2 16C8 7 15 2.500 24 2.500S40 7 46 16C40 25 33 29.500 24 29.500S8 25 2 16z" stroke="#999" strokeWidth="3.200" />
            <path d="M26 9.500A7 7 0 1 0 32 15.500A4.500 4.500 0 0 1 26 9.500z" fill="#999" />
          </svg>
        </button>
      </div>
      <PriceChart />
      <div className="flex h-[59px] items-center pl-[18px]">
        <Picker label="副图指标一" value="成交量" />
        <Reading text="251917" className="ml-[6px] text-[#222]" />
        <Reading text="MA5:287974" className="ml-4 text-[#edc11a]" />
        <Reading text="10:214901" className="ml-4 text-[#cc29cc]" />
      </div>
      <VolumeChart />
      <div className="flex h-[59px] items-center pl-[18px]">
        <Picker label="副图指标二" value="MACD" />
        <Reading text="DIF:-0.06" down className="ml-[6px] text-[#222]" />
        <Reading text="DEA:1.76" down className="ml-4 text-[#edc11a]" />
        <Reading text="M:-3.64" down className="ml-4 text-[#cc29cc]" />
      </div>
      <MacdChart />
      <div className="pt-1 pl-[18px]">
        <button aria-label="副图指标三" className="block h-[52px] w-[181px] rounded-lg border-2 border-[#e6e8eb] bg-[#f6f8fb]" />
      </div>
    </main>
  );
}
